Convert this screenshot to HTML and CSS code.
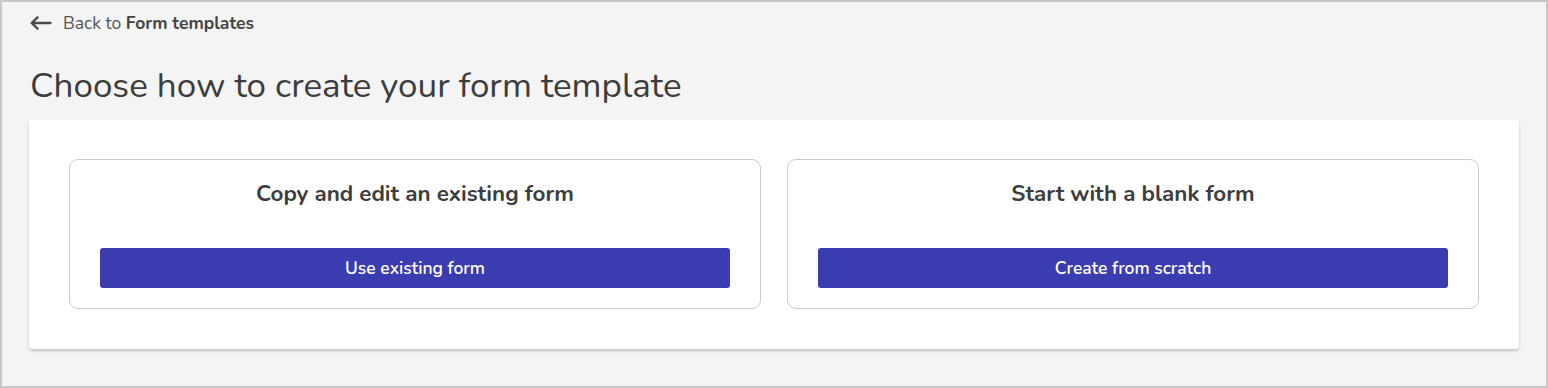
FILE: index.html
```html
<!DOCTYPE html>
<html lang="en">
<head>
<meta charset="utf-8">
<title>Choose how to create your form template</title>
<link rel="stylesheet" href="styles.css">
</head>
<body>
<div class="frame">
  <a class="back" href="#">
    <svg class="back-icon" width="24" height="16" viewBox="0 0 24 16" aria-hidden="true">
      <path d="M21.5 8H2.8M8.6 2.3L2.6 8L8.6 13.7" fill="none" stroke="#4a4a4a" stroke-width="2.3" stroke-linecap="round" stroke-linejoin="round"/>
    </svg>
    <span>Back to <strong>Form templates</strong></span>
  </a>
  <h1 class="title">Choose how to create your form template</h1>
  <div class="panel">
    <div class="option">
      <h2 class="option-title">Copy and edit an existing form</h2>
      <button class="btn">Use existing form</button>
    </div>
    <div class="option">
      <h2 class="option-title">Start with a blank form</h2>
      <button class="btn">Create from scratch</button>
    </div>
  </div>
</div>
</body>
</html>
```
FILE: styles.css
```css
* { box-sizing: border-box; }
html, body { margin: 0; padding: 0; }
body {
  font-family: "Nunito", "Open Sans", "Noto Sans", sans-serif;
  color: #3d3d3d;
  background: #f4f4f4;
}
.frame {
  width: 1548px;
  height: 388px;
  border: 2px solid #c8c8c8;
  background: #f4f4f4;
  padding: 0 27px 0 27px;
}
.back {
  display: flex;
  align-items: center;
  gap: 10px;
  height: 42px;
  color: #555;
  text-decoration: none;
  font-size: 17.5px;
}
.back strong { font-weight: 700; color: #444; }
.title {
  margin: 19px 0 0 1px;
  font-size: 35px;
  font-weight: 400;
  line-height: 46px;
  color: #3c3c3c;
}
.panel {
  margin-top: 11px;
  background: #fff;
  border-radius: 3px;
  box-shadow: 0 2px 3px rgba(0,0,0,0.2);
  padding: 39px 40px 40px 40px;
  display: flex;
  gap: 26px;
}
.option {
  flex: 1;
  border: 1px solid #cbcbcb;
  border-radius: 9px;
  padding: 19px 30px 20px 30px;
  display: flex;
  flex-direction: column;
  align-items: stretch;
}
.option-title {
  margin: 0;
  text-align: center;
  font-size: 22.4px;
  font-weight: 700;
  line-height: 30px;
  color: #3d3d3d;
}
.btn {
  margin-top: 39px;
  height: 40px;
  border: 0;
  border-radius: 3px;
  background: #3c3cb1;
  color: #fff;
  font-family: inherit;
  font-size: 17.5px;
  font-weight: 600;
}
```
